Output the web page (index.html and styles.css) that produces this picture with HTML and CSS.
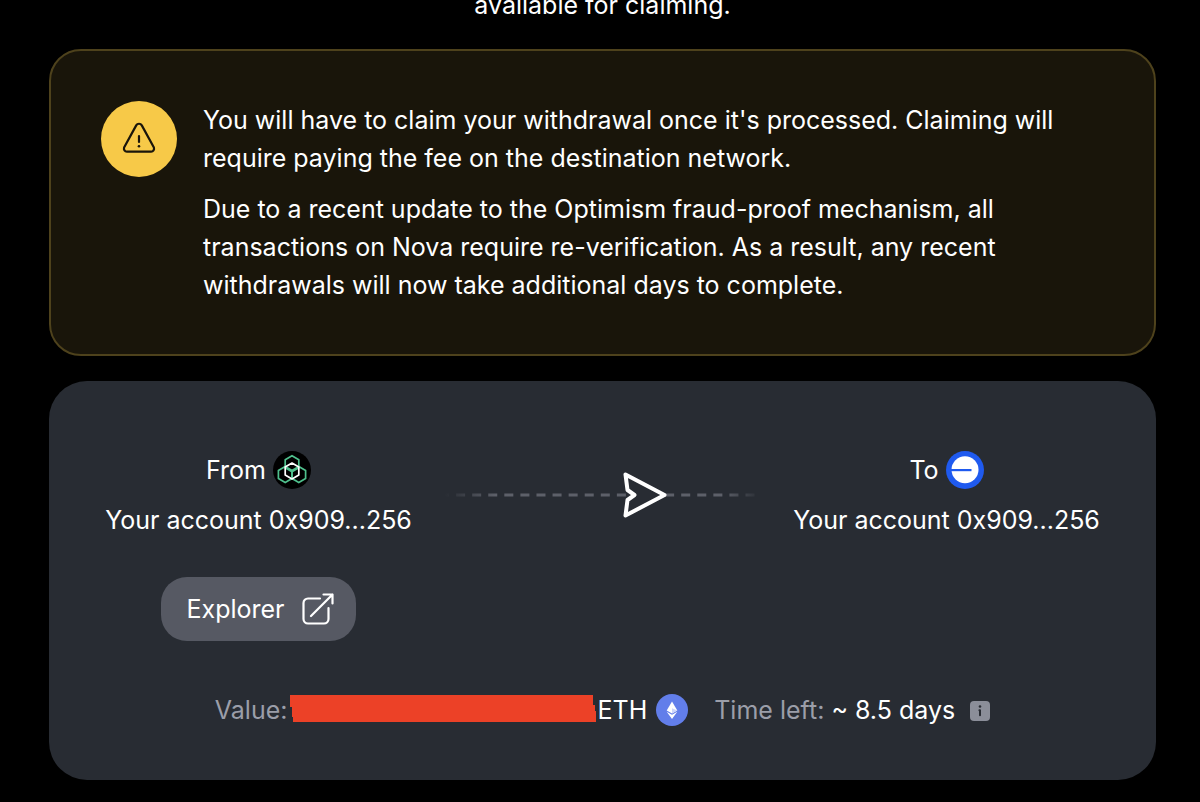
FILE: index.html
```html
<!DOCTYPE html>
<html lang="en">
<head>
<meta charset="utf-8">
<meta name="viewport" content="width=device-width, initial-scale=1">
<title>Withdrawal</title>
<link rel="stylesheet" href="styles.css">
</head>
<body>
<main class="page">
  <p class="intro">available for claiming.</p>

  <section class="alert">
    <span class="alert-icon">
      <svg width="36" height="36" viewBox="0 0 36 36" fill="none" stroke="#1a150a" stroke-width="2.2" stroke-linecap="round" stroke-linejoin="round" aria-hidden="true">
        <path d="M15.200 4.400a3.200 3.200 0 0 1 5.600 0l12.100 22.100a3.200 3.200 0 0 1-2.800 4.200H5.900a3.200 3.200 0 0 1-2.800-4.200z"/>
        <path d="M18 15v6"/>
        <circle cx="18" cy="25.300" r="1.300" fill="#1a150a" stroke="none"/>
      </svg>
    </span>
    <div class="alert-text">
      <p>You will have to claim your withdrawal once it's processed. Claiming will require paying the fee on the destination network.</p>
      <p>Due to a recent update to the Optimism fraud-proof mechanism, all transactions on Nova require re-verification. As a result, any recent withdrawals will now take additional days to complete.</p>
    </div>
  </section>

  <section class="card">
    <div class="route">
      <div class="party">
        <div class="chain">
          <span>From</span>
          <svg width="38" height="38" viewBox="0 0 38 38" fill="none" stroke-width="1.7" stroke-linejoin="round" aria-hidden="true">
            <circle cx="19" cy="19" r="19" fill="#000"/>
            <g stroke="#4fc08d">
              <path d="M19 4.700l6.800 4v8L19 20.700l-6.800-4v-8z"/>
              <path d="M12.200 15.600l6.800 4v8l-6.800 4-6.800-4v-8z"/>
              <path d="M25.800 15.600l6.800 4v8l-6.800 4-6.800-4v-8z"/>
            </g>
            <path d="M19 12l6.800 4v8L19 28l-6.800-4v-8z" stroke="#fff"/>
          </svg>
        </div>
        <p>Your account 0x909...256</p>
        <button class="explorer" type="button">
          <span>Explorer</span>
          <svg width="32" height="32" viewBox="0 0 32 32" fill="none" stroke="#fff" stroke-width="2.2" stroke-linecap="round" stroke-linejoin="round" aria-hidden="true">
            <path d="M18 5.500H6a4.500 4.500 0 0 0-4.500 4.500v16A4.500 4.500 0 0 0 6 30.500h16a4.500 4.500 0 0 0 4.500-4.500V15"/>
            <path d="M9 23L30.500 1.500M21.500 1.500h9v9"/>
          </svg>
        </button>
      </div>

      <svg class="arrow" width="316" height="50" viewBox="0 0 316 50" fill="none" aria-hidden="true">
        <defs>
          <linearGradient id="fade" gradientUnits="userSpaceOnUse" x1="0" y1="0" x2="316" y2="0">
            <stop offset="0" stop-color="#5d6069" stop-opacity="0"/>
            <stop offset=".16" stop-color="#5d6069"/>
            <stop offset=".88" stop-color="#5d6069"/>
            <stop offset="1" stop-color="#5d6069" stop-opacity="0"/>
          </linearGradient>
        </defs>
        <path d="M-5 25H316" stroke="url(#fade)" stroke-width="3" stroke-dasharray="9 7.080"/>
        <path d="M180.500 4.500L219.500 25 180.500 45.500l2-15.500 7-5-7-5z" fill="#282c33" stroke="#fff" stroke-width="4" stroke-linejoin="round"/>
      </svg>

      <div class="party">
        <div class="chain">
          <span>To</span>
          <svg width="38" height="38" viewBox="0 0 38 38" aria-hidden="true">
            <circle cx="19" cy="19" r="19" fill="#1f5aef"/>
            <circle cx="19" cy="18.700" r="13.500" fill="#fff"/>
            <path d="M5 18h20.500v2.200H5z" fill="#1f5aef"/>
          </svg>
        </div>
        <p>Your account 0x909...256</p>
      </div>
    </div>

    <div class="summary">
      <div class="amount">
        <span class="muted">Value:</span>
        <svg class="redaction" width="307" height="30" viewBox="0 0 307 30" aria-hidden="true">
          <path d="M0 0h303v10h2v6h1v11H3v-5H2v-10H0z" fill="#ec4127"/>
        </svg>
        <span>ETH</span>
        <svg class="eth" width="32" height="32" viewBox="0 0 32 32" aria-hidden="true">
          <circle cx="16" cy="16" r="16" fill="#627eea"/>
          <path d="M16 7.500l5.300 9L16 19.500l-5.300-3z" fill="#fff"/>
          <path d="M10.700 17.700L16 20.800l5.300-3.100L16 25z" fill="#fff"/>
          <path d="M16 14.200l5.300 2.300L16 19.500z" fill="#cdd6fa"/>
        </svg>
      </div>
      <div class="time">
        <span><span class="muted">Time left:</span> ~ 8.5 days</span>
        <svg width="20" height="22" viewBox="0 0 20 22" aria-hidden="true">
          <rect y="2" width="20" height="20" rx="4" fill="#8b8e99"/>
          <circle cx="10" cy="7.500" r="1.300" fill="#282c33"/>
          <path d="M9.400 11.300h.6v5" fill="none" stroke="#282c33" stroke-width="2" stroke-linecap="round" stroke-linejoin="round"/>
        </svg>
      </div>
    </div>
  </section>
</main>
</body>
</html>
```
FILE: styles.css
```css
* {
  box-sizing: border-box;
}

body {
  margin: 0;
  background: #000;
  color: #fff;
  font: 25px/38px Inter, sans-serif;
  overflow: hidden;
}

p {
  margin: 0;
}

.page {
  margin-top: -14px;
  padding: 0 44px 22px 49px;
}

.intro {
  margin-bottom: 25px;
  text-align: center;
}

.alert {
  display: flex;
  gap: 26px;
  margin-bottom: 25px;
  padding: 50px;
  border: 2px solid #4e421c;
  border-radius: 32px;
  background: #19150a;
}

.alert-icon {
  display: flex;
  flex: none;
  align-items: center;
  justify-content: center;
  width: 76px;
  height: 76px;
  border-radius: 50%;
  background: #f7c948;
}

.alert-text {
  display: grid;
  gap: 13px;
}

.card {
  padding: 70px 55px 51px;
  border-radius: 38px;
  background: #282c33;
}

.route {
  display: flex;
  align-items: flex-start;
  justify-content: space-between;
}

.party {
  display: flex;
  flex-direction: column;
  align-items: center;
  gap: 12px;
  min-width: 309px;
}

.chain {
  display: flex;
  align-items: center;
  gap: 7px;
}

.arrow {
  margin-top: 19px;
}

.explorer {
  display: flex;
  align-items: center;
  gap: 17px;
  height: 64px;
  margin-top: 26px;
  padding: 0 22px 0 25px;
  border: 0;
  border-radius: 26px;
  background: #565963;
  color: inherit;
  font: inherit;
}

.summary {
  display: flex;
  justify-content: center;
  gap: 26px;
  margin-top: 50px;
}

.amount,
.time {
  display: flex;
  align-items: center;
}

.time {
  gap: 15px;
}

.muted {
  color: #9b9ea9;
}

.redaction {
  margin-left: 3px;
}

.eth {
  margin-left: 9px;
}
```
